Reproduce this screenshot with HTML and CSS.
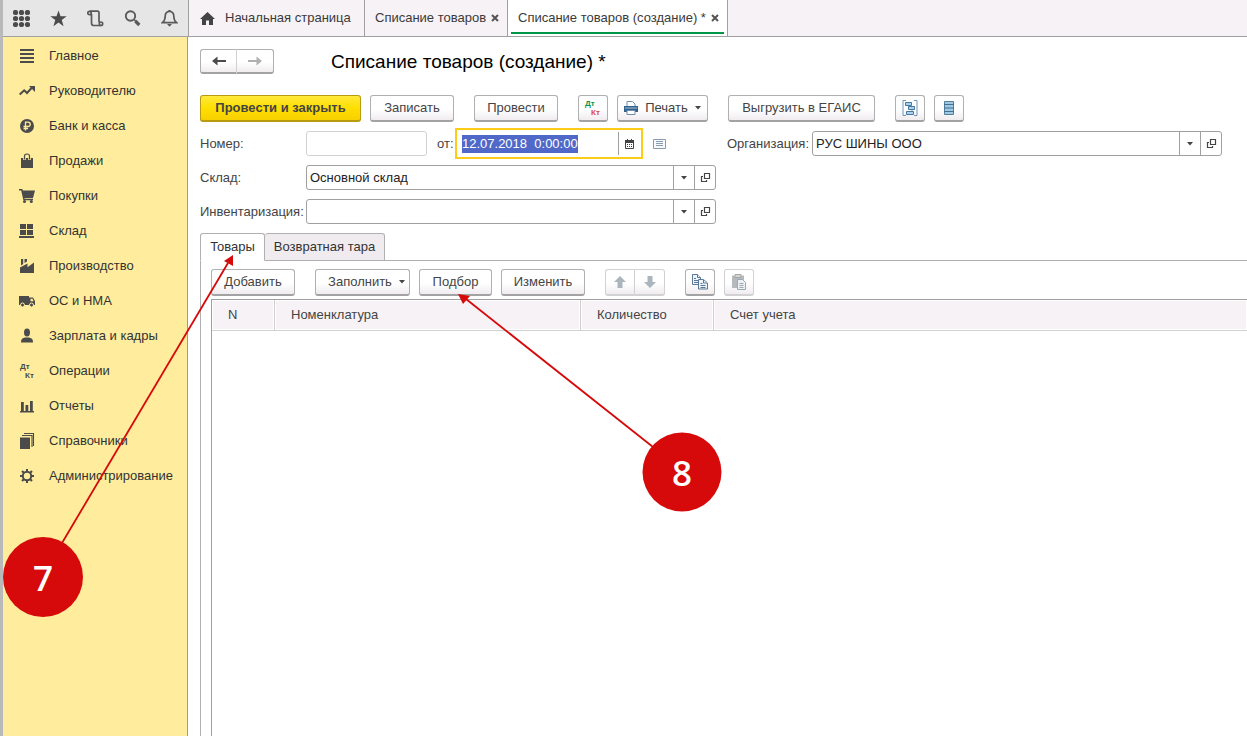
FILE: index.html
```html
<!DOCTYPE html>
<html lang="ru">
<head>
<meta charset="utf-8">
<meta name="viewport" content="width=device-width, initial-scale=1">
<title>Списание товаров (создание)</title>
<link rel="stylesheet" href="styles.css">
</head>
<body>
<svg class="sprite" width="0" height="0" aria-hidden="true">
  <symbol id="open" viewBox="0 0 11 11"><path d="M4.500 1.500h5v5h-5zM3 4.500H1.500v5h5V8" fill="none" stroke="#444" stroke-width="1.200"/></symbol>
  <symbol id="caret" viewBox="0 0 6 4"><path d="M0 0h6L3 3.500z" fill="#444"/></symbol>
  <symbol id="close" viewBox="0 0 8 8"><path d="M1 1l6 6M7 1L1 7" stroke="#555" stroke-width="2" fill="none"/></symbol>
</svg>
<div class="app">
  <header class="topbar">
    <div class="tools">
      <button class="tool" aria-label="Меню"><svg width="17" height="17" viewBox="0 0 17 17" fill="#4b4b4b"><circle cx="2.500" cy="2.500" r="2.600"/><circle cx="8.500" cy="2.500" r="2.600"/><circle cx="14.500" cy="2.500" r="2.600"/><circle cx="2.500" cy="8.500" r="2.600"/><circle cx="8.500" cy="8.500" r="2.600"/><circle cx="14.500" cy="8.500" r="2.600"/><circle cx="2.500" cy="14.500" r="2.600"/><circle cx="8.500" cy="14.500" r="2.600"/><circle cx="14.500" cy="14.500" r="2.600"/></svg></button>
      <button class="tool" aria-label="Избранное"><svg width="17" height="17" viewBox="0 0 17 17"><path d="M8.500.5l2 5.800h6.200l-5 3.700 1.900 6.200-5.100-3.800-5.100 3.800L5.300 10l-5-3.700h6.200z" fill="#4b4b4b"/></svg></button>
      <button class="tool" aria-label="История"><svg width="17" height="17" viewBox="0 0 17 17" fill="none" stroke="#5a5a5a" stroke-width="1.700"><path d="M2.800 1.200h7.700c1 0 1.500.8 1.500 1.800v9.500M4.500 4v9c0 1.500.8 2.500 2.300 2.500h7"/><circle cx="2.500" cy="3" r="1.700"/><circle cx="14" cy="13.700" r="1.700"/></svg></button>
      <button class="tool" aria-label="Поиск"><svg width="17" height="17" viewBox="0 0 17 17" fill="none" stroke="#5a5a5a"><circle cx="6.500" cy="6" r="4.700" stroke-width="1.900"/><path d="M9.800 9.300l2 2" stroke-width="1.500"/><path d="M11.300 11l4 4" stroke-width="3.200"/></svg></button>
      <button class="tool" aria-label="Уведомления"><svg width="17" height="17" viewBox="0 0 17 17"><path d="M8.500 1.500c-3 0-4.300 2.200-4.300 4.700 0 3.600-1 5-2.800 6.500h14.200c-1.800-1.500-2.800-2.900-2.800-6.500 0-2.500-1.300-4.700-4.300-4.700z" fill="none" stroke="#5a5a5a" stroke-width="1.700"/><path d="M7.300 0h2.400v2H7.300zM6 14h5l-2.500 2.800z" fill="#5a5a5a"/></svg></button>
    </div>
    <nav class="pages">
      <a class="page page-home" href="#"><svg width="15" height="13" viewBox="0 0 15 13"><path d="M7.500 0L15 7h-2v6H9V8.500H6V13H2V7H0z" fill="#444"/></svg>Начальная страница</a>
      <div class="page page-doc"><a href="#">Списание товаров</a><button class="close" aria-label="Закрыть"><svg width="8" height="8"><use href="#close"/></svg></button></div>
      <div class="page page-doc page-active"><a href="#">Списание товаров (создание) *</a><button class="close" aria-label="Закрыть"><svg width="8" height="8"><use href="#close"/></svg></button></div>
    </nav>
  </header>
  <div class="body">
    <nav class="side">
      <a href="#"><svg viewBox="0 0 16 16"><path d="M1 1h14v2H1zM1 5h14v2H1zM1 9h14v2H1zM1 13h14v2H1z"/></svg>Главное</a>
      <a href="#"><svg viewBox="0 0 16 16"><path d="M.7 11.500l4.500-4.200L8 10l5-5.500" fill="none" stroke="#4b4b4b" stroke-width="2"/><path d="M10 3h6v6z"/></svg>Руководителю</a>
      <a href="#"><svg viewBox="0 0 16 16"><circle cx="8" cy="8" r="7"/><path d="M6.500 12.500V4.200H9c3 0 3 4.300 0 4.300H4.500M4.500 10.500H9" fill="none" stroke="#ffeb9c" stroke-width="1.300"/></svg>Банк и касса</a>
      <a href="#"><svg viewBox="0 0 16 16"><path d="M2 5h12v10H2z"/><path d="M5.500 7V3c0-3 5-3 5 0v4" fill="none" stroke="#ffeb9c" stroke-width="2.600"/><path d="M5.500 6.500V3c0-2.700 5-2.700 5 0v3.500" fill="none" stroke="#4b4b4b" stroke-width="1.200"/></svg>Продажи</a>
      <a href="#"><svg viewBox="0 0 16 16"><path d="M3 2.500h13l-2 7.500H4.700z"/><path d="M0 1.800h2.800L5 11.500h9" fill="none" stroke="#4b4b4b" stroke-width="1.500"/><circle cx="5.500" cy="13.500" r="1.500"/><circle cx="12.300" cy="13.500" r="1.500"/></svg>Покупки</a>
      <a href="#"><svg viewBox="0 0 16 16"><path d="M1 1h6v5H1zM8 1h6v5H8zM1 7h6v5H1zM8 7h6v5H8zM0 13h15v2H0z"/></svg>Склад</a>
      <a href="#"><svg viewBox="0 0 16 16"><path d="M1 15V9.500L8.500 5.500v3.800L15 4.500V15zM2 1h2.200v5L2 7.500zM5.500 1H8v2.500L5.500 5z"/></svg>Производство</a>
      <a href="#"><svg viewBox="0 0 16 16"><path d="M0 3h10v1.500h4l2 3.500v4H0z"/><path d="M11.500 5.800h2l1.200 2.400h-3.200z" fill="#ffeb9c"/><circle cx="3.500" cy="12" r="2" stroke="#ffeb9c"/><circle cx="12.500" cy="12" r="2" stroke="#ffeb9c"/></svg>ОС и НМА</a>
      <a href="#"><svg viewBox="0 0 16 16"><ellipse cx="8" cy="4.500" rx="3" ry="4"/><path d="M2 14.500c0-4 2-4.500 4-5h4c2 .5 4 1 4 5z"/></svg>Зарплата и кадры</a>
      <a href="#"><svg viewBox="0 0 16 16" class="dk"><text x="1" y="6">Дт</text><text x="6" y="15">Кт</text></svg>Операции</a>
      <a href="#"><svg viewBox="0 0 16 16"><path d="M1 13h14v1.500H1zM2 4h2.800v9.500H2zM6.500 7h2.800v6.500H6.500zM11 3h2.800v10.500H11z"/></svg>Отчеты</a>
      <a href="#"><svg viewBox="0 0 16 16"><path d="M1 4.500h10V16H1z"/><path d="M3 2.500h10V14M5 .5h9.500V13" fill="none" stroke="#4b4b4b" stroke-width="1.100"/></svg>Справочники</a>
      <a href="#"><svg viewBox="0 0 16 16"><circle cx="8" cy="8" r="4.200" fill="none" stroke="#4b4b4b" stroke-width="2"/><path d="M8 1v3M8 12v3M1 8h3M12 8h3M3 3l2 2M11 11l2 2M13 3l-2 2M5 11l-2 2" stroke="#4b4b4b" stroke-width="2"/></svg>Администрирование</a>
    </nav>
    <main class="main">
      <div class="heading">
        <div class="pair">
          <button class="btn" aria-label="Назад"><svg width="14" height="10" viewBox="0 0 14 10"><path d="M0 5l5.500-4.500V4H14v2H5.500v3.500z" fill="#4b4b4b"/></svg></button>
          <button class="btn" aria-label="Вперед"><svg width="14" height="10" viewBox="0 0 14 10"><path d="M14 5L8.500.5V4H0v2h8.500v3.500z" fill="#b0b0b0"/></svg></button>
        </div>
        <h1>Списание товаров (создание) *</h1>
      </div>
      <div class="bar">
        <div class="group"><button class="btn btn-primary">Провести и закрыть</button><button class="btn btn-m">Записать</button></div>
        <button class="btn btn-m">Провести</button>
        <div class="group">
          <button class="btn btn-icon" aria-label="Дт Кт"><svg width="18" height="18" viewBox="0 0 18 18" class="dk"><text x="1" y="7" fill="#0a9650">Дт</text><text x="7" y="16" fill="#e04848">Кт</text></svg></button>
          <button class="btn btn-menu btn-print"><svg width="14" height="14" viewBox="0 0 14 14"><path d="M3 6V.5h5.500L11 3v3" fill="#fff" stroke="#6d8fae"/><path d="M0 5h14v6H0z" fill="#33628c"/><path d="M1 7h12" stroke="#a9c1d6"/><path d="M3 9.500h8v4H3z" fill="#fff" stroke="#6d8fae"/></svg><span>Печать</span><svg width="6" height="4"><use href="#caret"/></svg></button>
        </div>
        <button class="btn btn-xl">Выгрузить в ЕГАИС</button>
        <div class="group">
          <button class="btn btn-icon" aria-label="Структура"><svg width="16" height="16" viewBox="0 0 16 16" fill="#a9d0ee" stroke="#47789d"><path d="M4 .5H1v15h3M12 .5h3v15h-3M7 5v2M10 9v2" fill="none" stroke="#6f99b8"/><path d="M3.500 2.500h6v3h-6zM6.500 6.500h6v3h-6zM4.500 11.500h7v3h-7z"/></svg></button>
          <button class="btn btn-icon" aria-label="Список"><svg width="12" height="16" viewBox="0 0 12 16"><path d="M1.500 1.500h9v13h-9z" fill="#9fc8e4" stroke="#55819f"/><path d="M1 4.500h10M1 8h10M1 11.500h10" stroke="#46708f"/></svg></button>
        </div>
      </div>
      <form class="form">
        <div class="row">
          <label for="num">Номер:</label>
          <input class="number" id="num" type="text">
          <label class="from" for="date">от:</label>
          <div class="field date"><input id="date" type="text" value="12.07.2018  0:00:00"><button type="button" aria-label="Календарь"><svg width="9" height="10" viewBox="0 0 9 10"><path d="M.5 1.500h8v8h-8z" fill="#fff" stroke="#444"/><path d="M0 1h9v3H0zM2 0h1v2H2zM6 0h1v2H6z" fill="#444"/><path d="M2 5.500h5M2 7.500h5" stroke="#444" stroke-dasharray="1 1"/></svg></button></div>
          <button type="button" class="plain" aria-label="Комментарий"><svg width="13" height="10" viewBox="0 0 13 10"><path d="M.5.5h12v9H.5z" fill="#f6f9fb" stroke="#8a9db0"/><path d="M3 2.500h7M3 4.500h7M3 6.500h7" stroke="#8a9db0"/></svg></button>
        </div>
        <div class="row org">
          <label for="org">Организация:</label>
          <div class="field"><input id="org" type="text" value="РУС ШИНЫ ООО"><button type="button" aria-label="Выбрать"><svg width="6" height="4"><use href="#caret"/></svg></button><button type="button" aria-label="Открыть"><svg width="11" height="11"><use href="#open"/></svg></button></div>
        </div>
        <div class="row">
          <label for="store">Склад:</label>
          <div class="field"><input id="store" type="text" value="Основной склад"><button type="button" aria-label="Выбрать"><svg width="6" height="4"><use href="#caret"/></svg></button><button type="button" aria-label="Открыть"><svg width="11" height="11"><use href="#open"/></svg></button></div>
        </div>
        <div class="row start">
          <label for="inv">Инвентаризация:</label>
          <div class="field"><input id="inv" type="text"><button type="button" aria-label="Выбрать"><svg width="6" height="4"><use href="#caret"/></svg></button><button type="button" aria-label="Открыть"><svg width="11" height="11"><use href="#open"/></svg></button></div>
        </div>
      </form>
      <div class="tabs" role="tablist">
        <button role="tab" aria-selected="true" class="tab tab-active">Товары</button>
        <button role="tab" aria-selected="false" class="tab">Возвратная тара</button>
      </div>
      <section class="panel">
        <div class="bar">
          <button class="btn btn-m">Добавить</button>
          <div class="group"><button class="btn btn-menu btn-fill"><span>Заполнить</span><svg width="6" height="4"><use href="#caret"/></svg></button><button class="btn btn-s">Подбор</button><button class="btn btn-m">Изменить</button></div>
          <div class="pair pair-off">
            <button class="btn" disabled aria-label="Вверх"><svg width="12" height="12" viewBox="0 0 12 12"><path d="M6 0l6 6H8.500v6h-5V6H0z" fill="#abb5be"/></svg></button>
            <button class="btn" disabled aria-label="Вниз"><svg width="12" height="12" viewBox="0 0 12 12"><path d="M6 12l6-6H8.500V0h-5v6H0z" fill="#abb5be"/></svg></button>
          </div>
          <div class="group">
            <button class="btn btn-icon" aria-label="Копировать"><svg width="16" height="16" viewBox="0 0 16 16" fill="#eef4fa" stroke="#5a7896"><path d="M.5.5h5l3 3v7h-8z"/><path d="M5.500.5v3h3M2 4.500h2M2 6.500h4M2 8.500h4"/><path d="M6.500 5.500h5l4 3.500v6h-9z"/><path d="M8.500 9.500h2M8.500 11.500h5M8.500 13.500h5M11.500 6v3h3.500"/></svg></button>
            <button class="btn btn-icon btn-off" disabled aria-label="Вставить"><svg width="16" height="16" viewBox="0 0 16 16"><path d="M1 1.500h12V14H1z" fill="#b7babd"/><path d="M4 .5h6v3H4z" fill="#d8d4d0" stroke="#a5a8aa"/><path d="M6.500 5.500h5l3 3v7h-8z" fill="#edf0f3" stroke="#9ba8b5"/><path d="M8.500 9.500h4M8.500 11.500h4M8.500 13.500h4" stroke="#9ba8b5"/></svg></button>
          </div>
        </div>
        <div class="sheet">
          <table>
            <colgroup><col class="c-n"><col class="c-item"><col class="c-qty"><col></colgroup>
            <thead><tr><th>N</th><th>Номенклатура</th><th>Количество</th><th>Счет учета</th></tr></thead>
          </table>
        </div>
      </section>
    </main>
  </div>
</div>
<svg class="notes" width="760" height="640" viewBox="0 0 760 640">
  <g stroke="#d60a0a" stroke-width="1.800"><path d="M62 543L228 263"/><path d="M653 447L466 299"/></g>
  <path d="M233 255v11l-9-5zM458 294l12 2-7 8z" fill="#d60a0a"/>
  <circle cx="43" cy="577" r="40" fill="#d60a0a"/><circle cx="682" cy="472" r="39.500" fill="#d60a0a"/>
  <text x="43" y="591">7</text><text x="682" y="486">8</text>
</svg>
<script src="app.js"></script>
</body>
</html>
```

FILE: styles.css
```css
* { box-sizing: border-box; }
body { margin: 0; background: #fff; color: #3a3a3a; font: 13px/18px "Liberation Sans", Arial, sans-serif; }
button, input { font: inherit; color: inherit; margin: 0; padding: 0; border: 0; background: none; }
a { color: inherit; text-decoration: none; }
svg { display: block; flex: none; }
.sprite { position: absolute; }
.app { display: flex; flex-direction: column; min-height: 100vh; overflow: hidden; border-left: 3px solid #b9b9b9; }

.topbar { display: flex; height: 37px; border-bottom: 1px solid #a0a0a0; background: #f7f2f6; }
.tools { display: flex; width: 186px; border-right: 1px solid #a0a0a0; background: #e6e6e6; }
.tool { display: flex; width: 37px; align-items: center; justify-content: center; }
.pages { display: flex; }
.page { display: flex; align-items: center; border-right: 1px solid #a0a0a0; white-space: nowrap; }
.page-home { width: 176px; padding-left: 11px; gap: 10px; }
.page-doc { width: 143px; padding: 0 8px 0 10px; justify-content: space-between; }
.page-active { width: 220px; background: linear-gradient(#009646, #009646) center 32px / 213px 2px no-repeat #fff; }
.close { display: flex; }

.body { display: flex; flex: 1; }
.side { display: flex; flex: none; flex-direction: column; width: 185px; padding-top: 1px; border-right: 1px solid #b8a31c; background: #ffed9d; color: #333; }
.side a { display: flex; height: 35px; align-items: center; gap: 14px; padding-left: 16px; white-space: nowrap; }
.side svg { width: 16px; height: 16px; fill: #4b4b4b; }
.dk { font: bold 8px/9px "Liberation Sans", Arial, sans-serif; overflow: visible; }

.main { display: flex; flex: 1; flex-direction: column; min-width: 0; padding: 12px 0 0 12px; }
.heading { display: flex; height: 25px; align-items: center; gap: 57px; margin-bottom: 21px; }
h1 { margin: 0; color: #000; font-size: 19px; line-height: 25px; font-weight: normal; }

.btn { display: flex; height: 27px; align-items: center; justify-content: center; padding: 0; border: 1px solid #b0b0b0; border-bottom: 2px solid #a3a3a3; border-radius: 3px; background: linear-gradient(#fff 55%, #f0ecef); color: #444; white-space: nowrap; }
.btn-primary { width: 161px; border-color: #b89b10; background: linear-gradient(#ffe93c, #ffdf00 50%, #f8d000); font-weight: bold; }
.btn-s { width: 73px; }
.btn-m { width: 84px; }
.btn-xl { width: 147px; }
.btn-icon { width: 30px; }
.btn-menu { gap: 7px; }
.btn-print { width: 91px; }
.btn-fill { width: 95px; padding-left: 8px; }
.btn-off, .pair-off .btn { border-color: #d2d2d2; }
.pair { display: flex; }
.pair .btn { width: 37px; height: 25px; }
.pair .btn:first-child { border-right-color: #d0d0d0; border-radius: 3px 0 0 3px; }
.pair .btn:last-child { border-left: 0; border-radius: 0 3px 3px 0; }
.pair-off .btn { width: 30px; height: 27px; }
.bar { display: flex; gap: 20px; }
.group { display: flex; gap: 9px; }

.form { display: grid; grid-template-columns: 516px minmax(0, 1fr); gap: 9px 11px; margin: 9px 25px 9px 0; color: #444; }
.row { display: flex; align-items: center; height: 25px; }
.row label { width: 106px; white-space: nowrap; }
.org label { width: 85px; }
.row .from { width: 21px; margin-left: 10px; }
.start { grid-column: 1; }
.number { width: 121px; height: 25px; padding: 0 4px; border: 1px solid #d2d2d2; border-radius: 3px; }
.field { display: flex; flex: 1; height: 25px; border: 1px solid #a0a0a0; border-radius: 3px; background: #fff; color: #222; }
.field input { flex: 1; width: 0; min-width: 0; padding: 0 3px; outline: 0; white-space: pre; }
.field button { display: flex; width: 21px; align-items: center; justify-content: center; border-left: 1px solid #a0a0a0; }
.date { flex: none; width: 182px; border-color: #fff; border-radius: 0; outline: 2px solid #fecb17; outline-offset: 1px; }
.date input::selection { background: #5069c8; color: #fff; }
.plain { display: flex; margin-left: 13px; }

.tabs { display: flex; height: 28px; border-bottom: 1px solid #b0b0b0; }
.tab { width: 120px; height: 28px; padding: 0; border: 1px solid #b0b0b0; border-left: 0; border-radius: 3px 3px 0 0; background: #f0ebef; color: #333; white-space: nowrap; }
.tab-active { width: 65px; border-left: 1px solid #b0b0b0; border-bottom-color: #fff; background: #fff; }
.panel { display: flex; flex: 1; flex-direction: column; padding: 8px 0 0 10px; border-left: 1px solid #b0b0b0; }
.sheet { flex: 1; margin-top: 3px; border: 1px solid #a0a0a0; border-width: 1px 0 0 1px; }
table { width: 100%; border-collapse: separate; border-spacing: 0; table-layout: fixed; }
th { height: 31px; padding: 0 0 0 16px; border: 1px solid #d0d0d0; border-width: 0 1px 1px 0; background: #f7f2f6; box-shadow: inset 0 0 0 1px #fff; color: #444; font-weight: normal; text-align: left; }
th:last-child { border-right: 0; }
.c-n { width: 63px; }
.c-item { width: 306px; }
.c-qty { width: 133px; }

.notes { position: absolute; left: 0; top: 0; pointer-events: none; }
.notes text { fill: #fff; font: 600 35px "Open Sans", "Noto Sans", sans-serif; text-anchor: middle; }
```

FILE: app.js
```js
const dateInput = document.getElementById("date");
dateInput.focus();
dateInput.select();
```
